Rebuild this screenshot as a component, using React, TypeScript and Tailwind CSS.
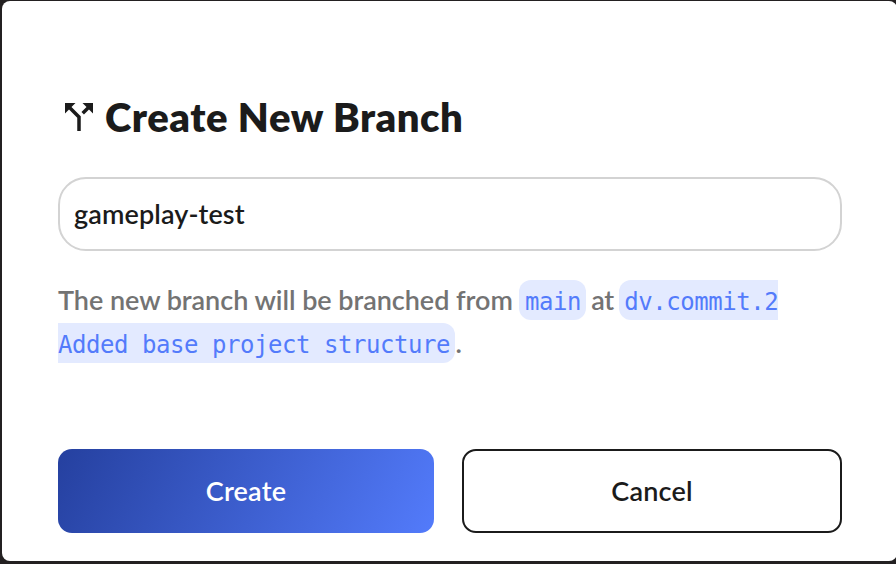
import React from "react";

function SplitIcon() {
  return (
    <svg viewBox="0 0 24 24" className="h-[42px] w-[42px] shrink-0 fill-[#1b1b1b]" aria-hidden="true">
      <path d="M14 4l2.29 2.29-2.88 2.88 1.42 1.42 2.88-2.88L20 10V4zM10 4H4v6l2.29-2.29 4.71 4.7V20h2v-8.41l-5.29-5.3z" />
    </svg>
  );
}

function Code({ children }: { children: React.ReactNode }) {
  return (
    <code className="rounded-[12px] bg-[#e3eaff] px-[5.5px] pt-[8px] pb-[4px] font-['DejaVu_Sans_Mono',monospace] text-[24px] leading-none font-normal tracking-[-0.45px] text-[#537bfb]">
      {children}
    </code>
  );
}

export default function App() {
  return (
    <div className="h-[564px] w-[896px] overflow-hidden bg-[#232021] pt-px pl-[2px] font-['Lato',sans-serif] text-[#1b1b1b]">
      <main className="h-[560px] w-[895px] rounded-[8px] bg-white px-14 pt-[95px]">
        <h1 className="flex h-[42px] items-center gap-[5px] text-[40px] font-extrabold tracking-[0.55px] whitespace-nowrap">
          <SplitIcon />
          <span>Create New Branch</span>
        </h1>
        <input
          className="mt-[39px] block h-[74px] w-[784px] rounded-[28px] border-2 border-[#d3d3d3] px-[14px] pb-[2px] text-[27px] font-semibold tracking-[0.1px] outline-none"
          defaultValue="gameplay-test"
          aria-label="Branch name"
        />
        <p className="mt-[27px] h-[88px] w-[784px] text-[27px] leading-[43px] font-semibold tracking-[-0.04px] text-[#737373]">
          The new branch will be branched from <Code>main</Code>
          <span className="tracking-[-0.3px] [word-spacing:-1.6px]"> at </span>
          <Code>
            dv.commit.2
            <br />
            Added base project structure
          </Code>
          .
        </p>
        <div className="mt-[83px] flex w-[784px] gap-7 text-[27px] font-semibold tracking-[0.2px]">
          <button className="h-[84px] w-[376px] shrink-0 rounded-[14px] bg-[linear-gradient(118deg,#25409f,#537bfb)] text-white">
            Create
          </button>
          <button className="h-[84px] w-[380px] shrink-0 rounded-[14px] border-2 border-[#1b1b1b]">Cancel</button>
        </div>
      </main>
    </div>
  );
}
